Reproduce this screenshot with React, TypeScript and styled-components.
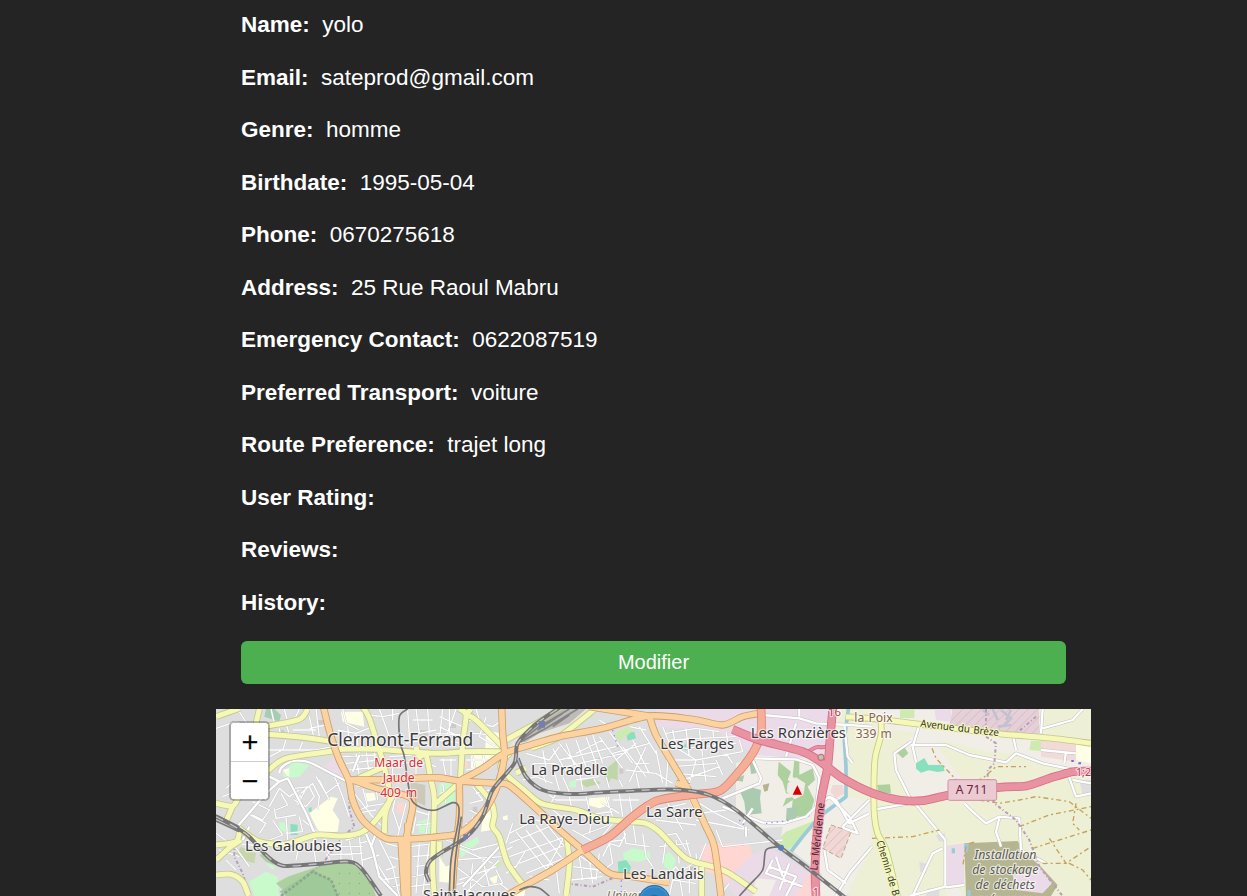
import React from 'react';
import styled, { createGlobalStyle } from 'styled-components';

const GlobalStyle = createGlobalStyle`
  *, *::before, *::after { box-sizing: border-box; }
  body {
    margin: 0;
    background: #242424;
    color: #fff;
    font-family: "Liberation Sans", Arial, sans-serif;
  }
`;

const Page = styled.main`
  display: flex;
  flex-direction: column;
  width: 875px;
  height: 896px;
  margin-left: 216px;
  overflow: hidden;
`;

const Profile = styled.section`
  display: flex;
  flex-direction: column;
  gap: 25px;
  padding: 11.4px 25px 25px;
`;

const Field = styled.div`
  display: flex;
  gap: 12.5px;
  font-size: 22.5px;
  line-height: 27.5px;
  white-space: pre;
`;

const Label = styled.strong`
  font-weight: 700;
`;

const Value = styled.span`
  font-weight: 400;
`;

const EditButton = styled.button`
  height: 43px;
  margin-top: -0.4px;
  padding: 0;
  border: 0;
  border-radius: 6px;
  background: #4caf50;
  color: #fff;
  font: 400 20px "Liberation Sans", Arial, sans-serif;
`;

const MapFrame = styled.section`
  position: relative;
  flex: none;
  height: 187px;
  overflow: hidden;
  background: #dfdedf;
`;

const MapSvg = styled.svg`
  display: block;
  width: 875px;
  height: 187px;
`;

const ZoomControl = styled.div`
  position: absolute;
  top: 12px;
  left: 13px;
  display: flex;
  flex-direction: column;
  width: 41px;
  border: 2px solid rgba(0, 0, 0, 0.25);
  border-radius: 5px;
  background-clip: padding-box;
`;

const ZoomButton = styled.button<{ $first?: boolean }>`
  height: ${(p) => (p.$first ? 39 : 37)}px;
  padding: 0 0 ${(p) => (p.$first ? 1 : 0)}px 1px;
  border: 0;
  border-bottom: ${(p) => (p.$first ? '1px solid #ccc' : '0')};
  border-radius: ${(p) => (p.$first ? '3px 3px 0 0' : '0 0 3px 3px')};
  background: #fff;
  color: #000;
  font: 400 22px/36px "DejaVu Sans", sans-serif;
  -webkit-text-stroke: 0.4px #000;
`;

const fields: [string, string][] = [
  ['Name:', 'yolo'],
  ['Email:', 'sateprod@gmail.com'],
  ['Genre:', 'homme'],
  ['Birthdate:', '1995-05-04'],
  ['Phone:', '0670275618'],
  ['Address:', '25 Rue Raoul Mabru'],
  ['Emergency Contact:', '0622087519'],
  ['Preferred Transport:', 'voiture'],
  ['Route Preference:', 'trajet long'],
  ['User Rating:', ''],
  ['Reviews:', ''],
  ['History:', ''],
];

/* Map geometry, three units per screen pixel. */
const areas: [string, string][] = [
  // commercial, farmland and open land on the east side
  ['#f1eee8', 'M1560 190L1640 160L1800 170L1840 30H2625V588H1900L1700 430L1520 400L1560 340Z'],
  ['#ebdbe8', 'M1320 27H1850L1830 165L1740 175L1620 165L1560 130L1500 90L1320 80Z'],
  ['#eef0d5', 'M1850 27H1968L1980 90L1970 590H1900L1880 440L1850 400L1900 200Z'],
  ['#f1eee8', 'M1845 290L1895 290L1965 300L1965 440L1890 588H1810Z'],
  ['#eef0d5', 'M1990 85L2100 100L2030 160L2040 220L2100 320L2190 440V588H1968V90Z'],
  ['#eef0d5', 'M2140 130L2200 125L2320 155L2400 160L2500 195L2625 210V588H2240L2180 450L2080 315L2200 300L2230 250Z'],
  ['#f1eee8', 'M2090 115L2155 130L2240 240L2200 300L2090 310L2040 210V170Z'],
  ['#e4d0d8', 'M2210 27H2470V120L2300 100L2200 75Z'],
  ['#eef0d5', 'M2470 27H2625V125L2470 110Z'],
  ['#cdebb0', 'M2052 27H2095V54H2052Z M2445 122H2500V155L2440 150Z'],
  ['#ebdbe8', 'M2155 27H2205V65L2160 60Z'],
  ['#f2dad9', 'M2475 110L2580 125V185L2475 170Z'],
  ['#ffffe5', 'M2580 130H2625V190L2580 180Z'],
  ['#dfdedf', 'M2590 240H2625V285H2600Z M2160 405L2187 400V424L2170 425Z M2110 485L2135 492L2130 520L2112 515Z M2135 565H2170V588H2130Z'],
  ['#ebdbe8', 'M2192 437L2245 430V555L2190 565Z'],
  ['#b6b592', 'M2245 430L2405 423L2420 450L2475 500L2525 555L2505 588H2250Z'],
  ['#ebdbe8', 'M2390 525L2440 515L2470 500L2508 550L2480 580L2400 570Z'],
  ['#9ccbd8', 'M2245 432H2258L2255 455L2245 458Z M2207 445H2217V460H2207Z M2254 570H2264V588H2254Z'],
  ['#add19e', 'M2040 155L2065 142L2077 160L2060 175Z M1983 255L2022 253L2025 280L1988 280Z'],
  ['#88e0be', 'M2100 190L2125 174L2137 195L2180 194L2186 213L2165 216L2138 211L2115 218L2100 206Z'],
  // woods and parks around the hill
  ['#add19e', 'M1688 185L1725 215L1715 240L1750 265L1755 290L1710 280L1700 245L1685 225Z M1735 180H1750V225L1790 205L1797 240L1775 260L1795 300L1780 350L1725 350L1730 300L1700 320L1710 295L1760 285L1760 250L1730 230Z'],
  ['#aacbaf', 'M1572 275L1605 262L1635 270L1632 295L1637 340L1590 345L1585 305Z M1600 180L1620 185V220L1605 222Z M1550 240L1585 225L1580 245Z M1712 325L1745 320L1740 360L1710 360Z'],
  ['#f0ebe6', 'M1715 250L1740 232L1768 250L1762 285L1735 298L1712 275Z'],
  ['#b5b38b', 'M1640 255L1660 250L1655 272L1645 275Z'],
  ['#cdebb0', 'M1670 435L1710 395L1800 360L1770 400L1730 440L1705 455Z'],
  ['#dfdedf', 'M1500 300L1575 350L1640 385L1700 380L1690 440L1600 440L1480 420Z'],
  ['#ffd6d1', 'M1455 440L1490 430L1600 430L1610 465L1570 500L1530 550L1500 525L1460 510Z M1745 515L1800 525V588H1735Z'],
  ['#ebdbe8', 'M1600 470L1660 440L1780 520L1740 588H1560L1530 550Z'],
  ['#f2efe9', 'M1620 535L1680 540L1660 588H1610Z'],
  ['#efd8d5', 'M1845 375L1905 395L1875 475L1820 445Z M1850 255L1880 255L1885 280L1860 295L1843 275Z'],
  // western districts
  ['#ebdbe8', 'M315 205L365 165L385 235Z'],
  ['#c8facc', 'M200 215L235 185L280 195L250 230L205 235Z M100 545L150 515L185 530L190 588H115Z M150 490L180 500L170 510Z'],
  ['#a5cdb2', 'M145 50L150 27H175L195 45L190 65Z'],
  ['#c8d7ab', 'M60 460L75 440L120 460L115 490L80 480Z'],
  ['#add19e', 'M215 530L290 505L330 490L400 490L440 510L470 560L480 588H220L180 550Z M130 465L150 460L175 495L150 485Z'],
  ['#a0c99a', 'M190 575L290 510L340 540L370 588H210Z'],
  ['#ffffe5', 'M280 340L345 290L365 295L350 330L370 360L365 395L310 400Z M375 35L440 35L445 80L380 65Z M200 210L220 205L220 235Z M240 290L255 285L255 315L242 310Z'],
  ['#88e0be', 'M223 372L245 374V405H224Z M278 323L287 322V335H278Z'],
  ['#c8facc', 'M605 365L640 355L648 400H610Z M670 250L720 245L715 310L670 315Z M190 365L212 368L215 395L190 392Z'],
  ['#ffd6d1', 'M545 308L567 310V342L542 340Z M555 145L580 145V165H555Z M745 180L755 188L752 205L742 200Z'],
  ['#cdc9ba', 'M582 245L628 255V318L590 300Z'],
  ['#ffffe5', 'M765 165H840L825 205H765Z M810 90L850 100V150H808Z M670 470L690 500L720 485L715 550L670 545Z M800 355L830 320L825 390L795 395Z'],
  ['#ffffe5', 'M1120 295L1180 290L1180 315L1150 325L1115 315Z M445 280L475 278L480 300L450 305Z M860 350L875 345V360H862Z M820 535L845 525L840 560Z M890 580L915 550L930 555L925 588H895Z'],
  ['#c8facc', 'M1220 460L1250 445L1300 455L1305 475L1270 485L1225 480Z M1340 470L1360 455L1380 480L1370 515L1345 500Z M730 440L785 410L790 425L735 475Z M1060 245L1080 240L1080 262H1060Z'],
  ['#88e0be', 'M1205 485L1230 480L1245 500L1240 520L1208 522Z M1230 98L1255 95L1260 115L1235 122Z M1395 145L1410 130L1412 152Z'],
  ['#cdebb0', 'M1195 100L1240 78L1250 92L1210 125Z M835 480L860 490L845 505Z'],
  ['#bfd6a6', 'M1160 215L1205 178L1205 240L1185 235L1175 255Z M1092 245L1130 235L1155 250L1110 262Z'],
  ['#eae5dc', 'M875 150L920 80L1040 27H1130L1030 100Z'],
];

const buildings = 'M305 60h24v14h-24z M190 90h15v10h-15z M610 90h25v18h-25z M700 70h20v14h-20z M770 320h14v18h-14z M1210 205h12v16h-12z M1420 500h14v10h-14z';

const minor = [
  // north west
  'M0 85L60 65L120 90M65 27L95 75M165 27L175 70M205 27L215 65M250 27L235 60M190 85L195 115M210 70L225 120M280 50L295 120M230 90H300M260 125L250 150M155 150H300L350 140M160 170L200 150L210 120M300 27L310 110M280 85L330 75M380 27L390 70L430 90M365 90L420 100L470 80M375 120L430 115M395 80L400 130L450 150M420 100L430 160M490 27L520 110L560 100M460 45L500 50L550 40M530 27L530 60M575 27L580 110L600 170M600 27L610 100L660 90M635 27L640 100M590 60H650M600 140L650 135M570 130L620 120',
  'M380 170L480 165M390 190L490 180M400 210L500 200M420 160L430 230M450 150L460 225M475 155L480 215M520 170L590 165M530 190V230M560 190L610 185L660 200M600 180V230M630 170L640 230M510 250L540 275M480 260L485 300M440 265L455 320L430 330M415 280L470 350M450 320L510 310M460 340L500 380M420 340L480 330M545 260L530 330L550 390M570 310L545 410M590 330L640 345M600 350L590 400M640 330L630 405M600 375L660 370',
  // west
  'M160 320L190 265L220 290L250 270M175 325L180 355L240 345M195 280L215 315L180 330M235 265L280 260L295 290L270 320L235 300M255 280L290 250L310 290L305 330M270 265L245 315M300 230L330 280L370 250M310 240L340 300M350 215L380 290L400 350M110 305L160 330L140 360L110 345M95 340L150 370L130 400M120 270L150 300M170 360L200 405L160 420M210 350L215 420M250 350L260 395L210 400M260 360L310 400M180 250L150 275M80 280L60 240L30 265M20 290L70 270',
  'M0 400L40 430M60 430L150 440M10 450L70 470M30 480L60 510M50 430L100 500M250 435L240 480M290 420L300 490M330 415L340 480M375 420V480M400 420L410 480M430 410L440 500M320 440H440M330 465L440 460M430 430L470 420M440 480L490 465M490 420L530 500L550 588M470 470L520 550M510 430L545 440M520 470L555 480M540 500L510 510M500 540L560 530M530 560L570 550M580 440L660 430M590 470L650 465M600 500L660 490M590 530L640 520M585 560L660 550M610 430L600 580M640 430L620 580',
  // centre
  'M670 50L740 80M680 27L670 120L740 130M700 27L700 100M720 27L690 110M670 80L730 110M660 100L740 105M760 60L830 80L860 60M780 27L800 90M810 50L790 110L840 140M770 100L840 105M670 180H720M680 175L690 230M705 175V230M750 180H840M770 165L780 220M800 160L810 210M750 210L830 200M670 280L720 270M680 250L690 310M770 260L800 300L760 310M780 280L820 270M760 330L800 350M750 370L790 380M770 350L760 400M800 330L770 390',
  'M930 160L1000 180L1030 140M950 190L1020 190M980 150L990 200M1010 145L1050 215M1030 130L1090 205M1050 130L1080 210M1080 120L1110 200M1110 110L1140 190M1130 105L1160 190M1030 180L1200 140M1050 200L1220 160M1080 160L1160 120M1150 110L1220 205M1180 95L1250 190M1200 180L1260 130M1190 160L1300 130M1220 140L1290 230M1250 120L1300 220M1270 80L1320 160M1290 140L1240 245M1260 190L1300 190M1230 210L1320 220M1210 240L1220 262M1260 220L1270 265M1240 80L1290 90M1150 60L1180 80',
  'M920 240L960 230L1010 250M980 220L990 250M1010 200L1030 270M1040 230L1060 275M1080 240L1150 230M1090 215L1100 270M1130 230L1150 265M1170 230L1180 265M1000 285L1020 300L1110 300M1020 280L1000 320M1060 290L1070 340M1110 290L1120 330M1170 290L1190 350M1210 280L1220 350M1240 290L1250 350M1190 300L1270 300M1110 345L1190 335M1160 310L1210 340M1010 330L1050 360M1130 340L1120 400M1180 375L1100 405M1070 390L1140 430M1190 370L1140 430',
  // south centre
  'M880 430L1000 380M880 470L1050 410M910 490L1060 430M930 520L1080 460M900 395L1000 520M930 390L1020 510M960 375L1050 490M990 370L1070 470M1045 410L980 530M880 400L960 360L1000 370M890 370L870 430M870 480L910 560M930 450L900 500L870 500M940 530L1000 540M1020 500L1030 580M1060 480L1060 588M1080 460L1140 500M1070 500L1150 510M1065 540L1160 530M1090 470L1100 540M1120 480L1130 550M1150 460L1140 540M1160 470L1180 430L1210 440L1230 400M1140 430L1220 420M1180 430L1190 490L1150 520M1220 370L1230 430L1300 440M1250 360L1260 430M1280 400L1290 470L1310 500',
  'M690 420L770 450L850 430M720 440L830 490M710 480L860 470M720 500L800 560M730 540L840 500M770 490L760 588M800 480L820 560M740 588L850 480M840 510L860 550L800 560M850 460L890 440M700 560L770 540M850 550L900 588M870 520L900 500',
  // Farges and Sarre
  'M1340 80L1360 130L1440 180L1580 155L1570 120M1350 100L1440 85L1510 95M1370 90L1380 145M1410 85L1420 170M1450 90L1460 170M1490 90L1500 160M1530 95L1540 150M1360 120L1560 110M1400 145L1560 130M1370 180L1440 180L1420 250M1370 200L1500 190M1380 220L1500 230M1400 240L1510 200M1460 180L1470 245M1500 180L1520 225M1530 160L1550 190M1340 130L1355 190L1350 260M1320 150L1340 250M1320 220L1370 250',
  'M1320 330L1410 310M1350 300L1400 390M1320 360L1440 375M1450 310L1500 340L1590 385M1450 340L1530 330M1440 360L1600 390M1500 390L1520 440L1700 420M1420 300L1440 340M1330 410L1380 400L1410 450M1330 440L1420 430M1350 420L1340 490M1380 420L1390 490M1410 420L1430 490M1400 510L1450 480L1470 430M1440 460L1450 588M1330 550L1380 500L1400 530M1360 588L1370 540L1440 550M1390 530L1400 588M1420 500L1420 580M1470 500L1450 530M1540 550L1510 588',
];

const streets = [
  'M60 385L150 280L190 245L215 235L270 340L300 410L290 430',
  'M190 220C190 200 220 180 250 182C290 182 310 205 395 245',
  'M190 245L160 230M390 420L450 400L470 450L490 530L545 588M480 400L465 440',
  'M430 165L410 215M420 255L440 260M80 420L100 380M740 560L860 430',
  'M1640 45L1750 55L1800 70L1900 75L1968 80M1750 50V27M1740 70L1710 170',
  'M1610 175L1740 178L1790 195L1810 235L1800 320L1770 350L1700 370L1640 368L1520 320M1610 180L1635 235L1630 250L1520 295M1580 370L1610 325M1590 380L1590 410',
  'M1800 320L1840 290L1900 350L1925 400L1885 385L1880 380L1960 300M1840 290L1860 300L1900 370L1960 340M1968 440L1900 520L1860 588M1825 450L1835 510L1890 550',
  'M1885 75L1895 170L1910 190M2110 75L2090 140L2100 185M2085 125L2035 160L2040 210L2080 290L2188 420V560L2080 588M2180 445L2150 460L2090 588M2190 562L2245 555M1968 330L2080 310M2085 135H2190L2260 165L2370 187L2400 160L2480 190L2625 220M2400 150L2390 100M2245 310L2270 335L2310 370L2350 350L2410 355L2415 450L2490 490M2350 355L2340 395L2355 440',
  'M2480 27L2475 100M2480 85L2570 60L2600 27M2475 150L2580 160M2550 155L2545 190M2550 205L2580 290L2625 280M2570 240L2625 250M1670 480L1650 520L1760 560M1660 500L1740 530L1710 588M1680 470L1700 530M1720 490L1690 570',
];

const secondary = [
  'M0 50L70 25M120 70L130 27M155 78L250 58L275 27',
  'M155 103L260 112L350 125M155 213L210 175L350 153L380 148L480 148L660 160L750 155L860 155',
  'M440 20L460 55L490 150L505 200L522 290L508 340L505 400M415 240L505 200',
  'M530 290L480 360L440 395L380 408L300 405L210 432L130 425L70 385',
  'M0 310L50 318L70 290L110 260M50 318L30 365M0 435L60 425L70 395M0 480L45 440L75 420M0 525L45 523L80 545L98 588',
  'M600 140L610 170L630 165L645 240L655 300L650 500L655 588',
  'M730 27L750 45L740 130L733 240M750 45L780 60L870 150M750 45L765 27M860 125L980 60L1040 20M945 145L1030 110L1145 20',
  'M880 160L855 205L930 275L980 312L1080 330L1150 355L1240 365L1290 370L1330 395L1410 475L1490 500L1540 520L1620 575',
  'M780 250L825 305L835 345L830 380L850 410L875 490L925 560M1050 400L1060 490L1050 588M900 220L930 205',
  'M660 310L740 240M670 425V470M1457 495V588',
  'M1890 50L1990 58L2115 73L2348 101L2500 114L2625 130',
  'M1995 62V105L1978 170L1974 240L1975 345L1985 400L2010 450L2045 588',
];

const primary = [
  'M322 20L345 110L370 180L398 240L410 300L440 360L500 410L540 418L650 412L720 403L760 380L810 325L845 255L865 170L860 100L857 20',
  'M398 240L520 238L660 233L730 243L840 250L880 256L960 325L1030 390L1100 450L1180 520L1250 530L1360 548',
  'M410 240L480 265L585 295L580 370L565 450V588M555 420L565 588M575 370L575 588',
  'M730 243L800 205L870 158L960 130L1030 110L1160 85L1300 48L1430 58L1520 75L1580 50L1640 38',
  'M730 243L730 350L715 480L708 588M1100 450L1010 510L920 560L870 588',
  'M1300 48L1320 105L1370 190L1420 275L1470 380L1495 440L1515 588M1420 260L1380 250M1120 20L1300 48',
];

const trunk = 'M1100 450L1180 410L1250 350L1320 303L1420 285L1510 273L1560 225L1610 160L1635 100V20';
const motorway = [
  'M1550 88L1630 120L1760 155L1820 190L1880 235L1970 280L2048 300L2120 302L2200 285L2350 262L2430 258L2500 235L2570 215L2625 213',
  'M1850 27L1842 120L1835 200L1815 300L1803 400L1797 500L1800 588',
];
const slipRoads = ['M1772 158L1800 142L1830 140L1848 110', 'M1795 170L1830 190L1842 160'];
const rails = [
  'M0 350L60 382L100 410L150 465L200 497L300 492L400 485L440 510L495 588',
  'M640 545L630 520L640 485L680 455L750 412L800 350L830 270L895 190L905 130L960 72L1035 20',
  'M905 175L930 230L980 270L1060 282L1160 277L1320 269L1400 270L1480 285L1560 330L1690 440L1770 500L1890 595',
];
const tram = [
  'M575 27L550 50L553 130L565 170L585 295L620 325L660 330L710 308L728 320L726 370L705 480L700 588M736 350L718 480L712 588',
  'M1570 588L1600 555L1640 510L1650 450L1690 440M910 570L940 560L970 565L1000 588',
];

/* Turns polylines into Catmull-Rom curves through the same points. */
const smooth = (paths: string[]) =>
  paths
    .join('')
    .split('M')
    .filter(Boolean)
    .map((part) => {
      const pts: number[][] = [];
      part.replace(/([LHV]?)\s*(-?\d+)(?:\s+(-?\d+))?/g, (_, cmd, a, b) => {
        const last = pts[pts.length - 1];
        if (cmd === 'H') pts.push([+a, last[1]]);
        else if (cmd === 'V') pts.push([last[0], +a]);
        else pts.push([+a, +b]);
        return '';
      });
      return pts.slice(1).reduce((d, p, i) => {
        const p0 = pts[Math.max(i - 1, 0)];
        const p1 = pts[i];
        const p3 = pts[Math.min(i + 2, pts.length - 1)];
        const c1 = [p1[0] + (p[0] - p0[0]) / 7, p1[1] + (p[1] - p0[1]) / 7];
        const c2 = [p[0] - (p3[0] - p1[0]) / 7, p[1] - (p3[1] - p1[1]) / 7];
        return `${d}C${c1} ${c2} ${p}`;
      }, `M${pts[0]}`);
    })
    .join('');

interface LineProps {
  d: string;
  color: string;
  width: number;
  dash?: string;
}

const Line = ({ d, color, width, dash }: LineProps) => (
  <path d={d} fill="none" stroke={color} strokeWidth={width} strokeDasharray={dash} strokeLinejoin="round" />
);

const Road = ({ paths, fill, edge, width }: { paths: string[]; fill: string; edge: string; width: number }) => {
  const d = smooth(paths);
  return (
    <>
      <Line d={d} color={edge} width={width + 5} />
      <Line d={d} color={fill} width={width} />
    </>
  );
};

const MapText = styled.text<{ $color?: string; $halo?: string }>`
  font-family: "Noto Sans", sans-serif;
  fill: ${(p) => p.$color ?? '#3c3c3c'};
  stroke: ${(p) => p.$halo ?? 'rgba(255, 255, 255, 0.65)'};
  stroke-width: 7px;
  stroke-linejoin: round;
  paint-order: stroke;
`;

const places: [string, number, number, number, number][] = [
  ['Clermont-Ferrand', 334, 137, 438, 54],
  ['Les Galoubies', 87, 454, 290, 45],
  ['La Pradelle', 945, 225, 230, 45],
  ['La Raye-Dieu', 910, 373, 272, 45],
  ['Les Farges', 1333, 146, 221, 45],
  ['Les Ronzières', 1604, 113, 286, 45],
  ['La Sarre', 1290, 352, 170, 45],
  ['Les Landais', 1221, 538, 243, 45],
  ['Saint-Jacques', 621, 600, 280, 45],
];

const CityMap = () => (
  <MapSvg viewBox="0 27 2625 561" preserveAspectRatio="none" aria-label="Clermont-Ferrand">
    <defs>
      <pattern id="hatch" width="28" height="28" patternUnits="userSpaceOnUse">
        <path d="M0 28L28 0" stroke="#dda9ae" strokeWidth="2" />
      </pattern>
      <pattern id="trees" width="30" height="30" patternUnits="userSpaceOnUse">
        <circle cx="10" cy="10" r="2" fill="#78a878" />
      </pattern>
      <filter id="tile" x="0" y="0" width="100%" height="100%">
        <feGaussianBlur stdDeviation="1.2" />
      </filter>
    </defs>
    <rect y="27" width="2625" height="561" fill="#dfdedf" />
    <g filter="url(#tile)">
      <rect x="-30" y="0" width="2685" height="620" fill="#dfdedf" />
      {areas.map(([color, d], i) => (
        <path key={i} d={d} fill={color} />
      ))}
      <path d="M2210 27H2470V120L2300 100L2200 75Z M1845 375L1905 395L1875 475L1820 445Z" fill="url(#hatch)" />
      <path d="M330 490L400 490L440 510L480 588H370Z" fill="url(#trees)" />
      <path d={buildings} fill="#cfcac7" />
      <path d="M1845 375L1905 395L1875 475L1820 445Z" fill="none" stroke="#c6a182" strokeWidth="3" strokeDasharray="14 8" />
      <Line d="M1897 27L1885 120L1890 200L1890 290L1810 350L1760 410L1725 455" color="#9ccbd8" width={11} />
      <path d="M2300 30L2320 45M2330 27L2345 60M2355 30L2385 55L2365 75M2385 30L2370 60M2345 80L2385 75" stroke="#c3c1cf" strokeWidth="8" fill="none" />
      <Line d={minor.join('')} color="#c8c8c8" width={6} />
      <Line d={minor.join('')} color="#fff" width={4} />
      <Line d={streets.join('')} color="#c2c1c1" width={10} />
      <Line d={streets.join('')} color="#fff" width={7} />
      <Line d="M2148 145L2160 175L2240 260L2300 235L2340 200H2430M2290 300L2350 310L2410 300L2460 290L2560 305L2625 355M1968 415L2090 410L2170 390M2410 380L2500 345L2625 320M2450 445L2530 420L2625 390M2500 415L2550 490L2625 440M2560 490L2600 510L2625 540M2480 490H2560M2580 310L2570 370L2590 390M2260 430L2280 425M2250 440L2240 500" color="#c5a15b" width={4} dash="15 9 6 9" />
      <Line d="M2310 27V100M2310 110L2340 130L2335 190L2315 210V260L2335 310L2400 360L2440 420L2470 500L2540 588M2460 50L2390 110M400 290L400 330L415 380L380 410L320 490L290 515M55 430L55 470L80 520L100 588M1050 550L1130 560L1200 530" color="#b69bbb" width={6} dash="10 7 3 7" />
      <Line d="M1570 360L1590 380M1650 370L1730 360M1190 90L1205 140M1216 525V588" color="#898cf5" width={4} dash="4 12" />
      <Line d="M195 588L290 515L345 540L365 588" color="#8ba98e" width={8} dash="9 5" />

      <Road paths={secondary} fill="#f5f8b7" edge="#c3c78c" width={15} />
      <Road paths={primary} fill="#fcd3a0" edge="#c9a06a" width={17} />
      <Road paths={[trunk]} fill="#f6ae99" edge="#d98673" width={21} />
      <Road paths={slipRoads} fill="#e892a2" edge="#d66e87" width={7} />
      <Road paths={motorway} fill="#e892a2" edge="#d66e87" width={21} />

      <path d="M905 130L950 70L1020 27H1110L1060 70L970 100L930 125Z" fill="#a6a5a5" opacity="0.65" />
      <Line d="M910 125L970 80L1060 27M915 125L990 85L1085 27M965 90L1040 40M1010 80L1060 45" color="#858585" width={5} />
      <Line d={smooth(rails)} color="#777" width={12} />
      <Line d={smooth(rails)} color="#c4c4c4" width={4} dash="25 22" />
      <Line d={smooth(tram)} color="#757575" width={5} />
      <Line d="M0 345L70 380M0 363L70 395" color="#777" width={5} />
      <path d="M968 63h19v20h-19z M742 403h14v14h-14z" fill="#777eae" />
      <circle cx="1695" cy="443" r="9" fill="#5d7eb8" />
      <circle cx="1815" cy="172" r="9" fill="#add19e" stroke="#d66e87" strokeWidth="4" />
      <path d="M1744 256L1758 284H1730Z" fill="#d40000" />
      <path d="M2566 180h7v6h-7z M2587 187h8v6h-8z M1116 327h6v6h-6z" fill="#6b6bd5" />
    </g>

    {places.map(([name, x, y, w, size]) => (
      <MapText key={name} x={x} y={y} fontSize={size} textLength={w} lengthAdjust="spacingAndGlyphs">{name}</MapText>
    ))}
    {['Maar de', 'Jaude', '409 m'].map((t, i) => (
      <MapText key={t} x={548} y={200 + i * 45} fontSize="36.5" wordSpacing="5" textAnchor="middle" $color="#d92e36">{t}</MapText>
    ))}
    <MapText x="1915" y="67" fontSize="37" wordSpacing="3" textLength="115" lengthAdjust="spacingAndGlyphs" $color="#87614f">la Poix</MapText>
    <MapText x="1919" y="113" fontSize="37" wordSpacing="3" textLength="108" lengthAdjust="spacingAndGlyphs" $color="#87614f">339 m</MapText>
    <MapText fontSize="31" wordSpacing="3" textLength="237" lengthAdjust="spacingAndGlyphs" transform="translate(2112 80) rotate(7)" $color="#333" $halo="#f5f8b7">Avenue du Brèze</MapText>
    <MapText fontSize="31" wordSpacing="3" textLength="204" lengthAdjust="spacingAndGlyphs" transform="translate(1804 512) rotate(-84)" $color="#3d202b" $halo="#e892a2">La Méridienne</MapText>
    <MapText fontSize="31" wordSpacing="3" textLength="172" lengthAdjust="spacingAndGlyphs" transform="translate(1981 425) rotate(73)" $color="#333" $halo="#f5f8b7">Chemin de B</MapText>
    <rect x="2196" y="239" width="146" height="62" rx="5" fill="#ebcad2" stroke="#d18fa3" strokeWidth="3" />
    <MapText x="2219" y="283" fontSize="37" textLength="95" lengthAdjust="spacingAndGlyphs" $color="#6b2443" $halo="#ebcad2">A 711</MapText>
    {['Installation', 'de stockage', 'de déchets', 'ménagers'].map((t, i) => (
      <MapText key={t} x={2368} y={477 + i * 45} fontSize="37" wordSpacing="4" fontStyle="italic" textAnchor="middle" $color="#5c5c52">{t}</MapText>
    ))}
    <MapText x="1836" y="48" fontSize="34" $color="#b43c58">16</MapText>
    <MapText x="2580" y="229" fontSize="32" $color="#b43c58">1;2</MapText>
    <MapText x="1791" y="588" fontSize="30" $color="#b43c58">1</MapText>
    <MapText x="1172" y="600" fontSize="37" fontStyle="italic" $color="#7b7953">Université</MapText>
    <path d="M1315 685C1310 645 1268 625 1268 602A47 47 0 0 1 1362 602C1362 625 1320 645 1315 685Z" fill="#3285c4" stroke="#2e6b9d" strokeWidth="3" transform="translate(0 1)" />
    <circle cx="1315" cy="603" r="43" fill="none" stroke="#4f9ad6" strokeWidth="3" />
    <circle cx="1315" cy="604" r="18" fill="#fff" stroke="#2e6b9d" strokeWidth="4" />
  </MapSvg>
);

export default function App() {
  return (
    <>
      <GlobalStyle />
      <Page>
        <Profile>
          {fields.map(([label, value]) => (
            <Field key={label}>
              <Label>{label}</Label>
              <Value>{value}</Value>
            </Field>
          ))}
          <EditButton>Modifier</EditButton>
        </Profile>
        <MapFrame>
          <CityMap />
          <ZoomControl>
            <ZoomButton $first aria-label="Zoom in">+</ZoomButton>
            <ZoomButton aria-label="Zoom out">−</ZoomButton>
          </ZoomControl>
        </MapFrame>
      </Page>
    </>
  );
}
